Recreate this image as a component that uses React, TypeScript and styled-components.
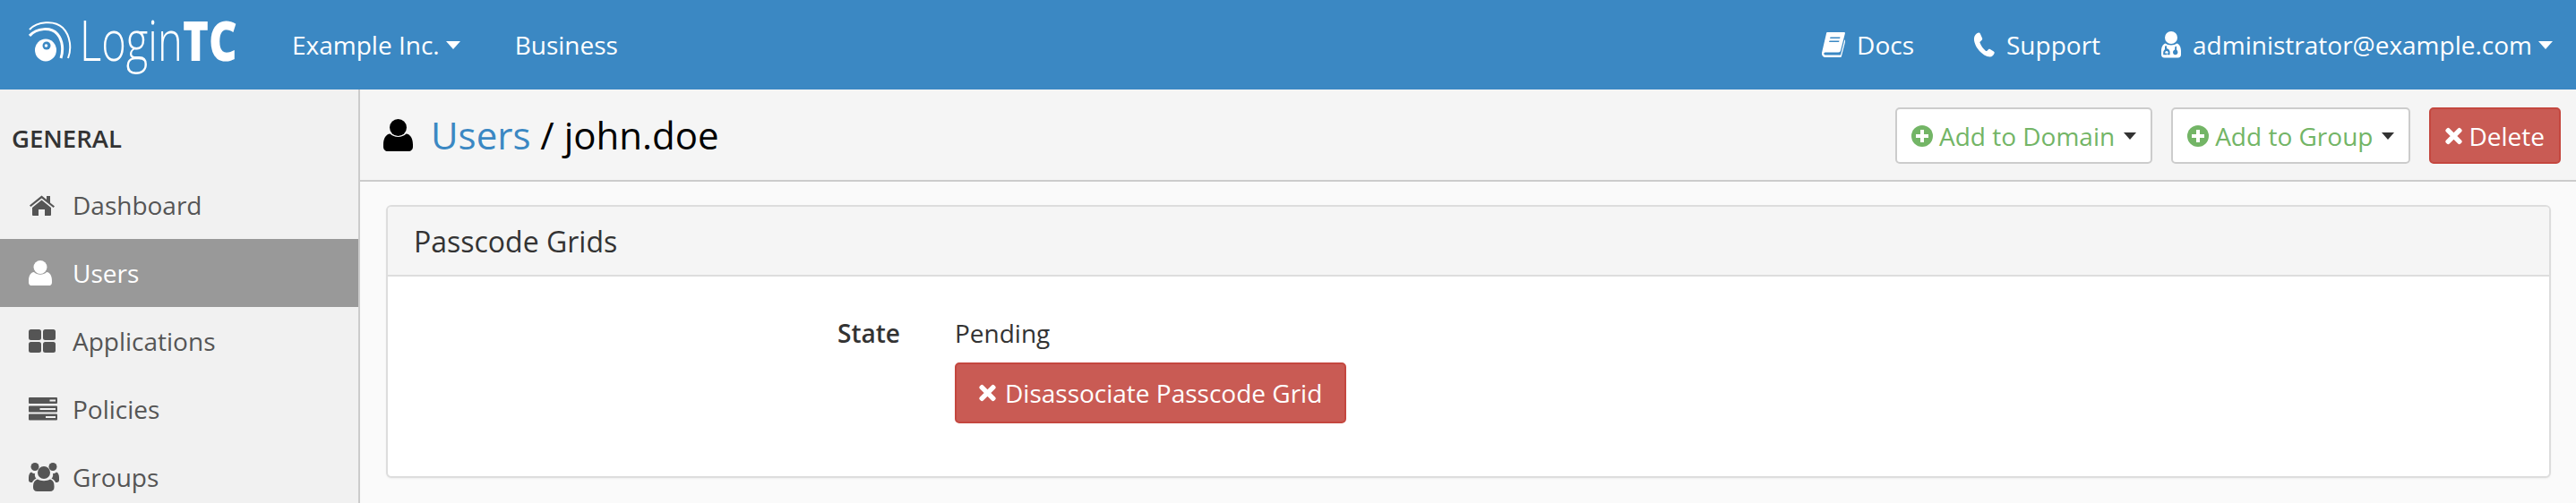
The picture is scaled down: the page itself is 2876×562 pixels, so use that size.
import React from "react";
import styled, { createGlobalStyle } from "styled-components";

const GlobalStyle = createGlobalStyle`
  html, body {
    margin: 0;
    padding: 0;
    background: #fafafa;
    font-family: "Open Sans", "Liberation Sans", sans-serif;
    font-size: 28px;
    color: #333;
  }
`;

const HomeIcon = () => (
  <svg width="30" height="24" viewBox="0 0 30 24" fill="currentColor">
    <path d="M1 12.500 14.500 1.500 20 6V2h4v7.400l5 4.100-1.400 1.500L14.500 4.400 2.400 14z" />
    <path d="M14.500 6.500 25 15v8a1 1 0 0 1-1 1h-6v-7h-7v7H5a1 1 0 0 1-1-1v-8z" />
  </svg>
);

const UserIcon = ({ size = 26 }: { size?: number }) => (
  <svg width={size} height={size * 1.09} viewBox="0 0 33 36" fill="currentColor">
    <circle cx="16.500" cy="9.500" r="9.500" />
    <path d="M7.500 16.500c2.400 2.200 5.400 3.500 9 3.500s6.600-1.300 9-3.500c4.500.5 7.500 5 7.500 12v2.500c0 3-2 5-5 5H5c-3 0-5-2-5-5v-2.500c0-7 3-11.500 7.500-12z" />
  </svg>
);

const GridIcon = () => (
  <svg width="30" height="26" viewBox="0 0 30 26" fill="currentColor">
    <rect x="0" y="0" width="14" height="12" rx="2.500" />
    <rect x="16" y="0" width="14" height="12" rx="2.500" />
    <rect x="0" y="14" width="14" height="12" rx="2.500" />
    <rect x="16" y="14" width="14" height="12" rx="2.500" />
  </svg>
);

const ServerIcon = () => (
  <svg width="32" height="26" viewBox="0 0 32 26" fill="currentColor">
    <path fillRule="evenodd" d="M1 0h30a1 1 0 0 1 1 1v5a1 1 0 0 1-1 1H1a1 1 0 0 1-1-1V1a1 1 0 0 1 1-1zm22.500 2.500v2H30v-2z" />
    <path fillRule="evenodd" d="M1 9.500h30a1 1 0 0 1 1 1v5a1 1 0 0 1-1 1H1a1 1 0 0 1-1-1v-5a1 1 0 0 1 1-1zm11.500 2.500v2H30v-2z" />
    <path fillRule="evenodd" d="M1 18.500h30a1 1 0 0 1 1 1v5a1 1 0 0 1-1 1H1a1 1 0 0 1-1-1v-5a1 1 0 0 1 1-1zm18 2.500v2H30v-2z" />
  </svg>
);

const GroupIcon = () => (
  <svg width="34" height="32" viewBox="0 0 34 32" fill="currentColor">
    <circle cx="7" cy="4.500" r="4.500" />
    <circle cx="27" cy="4.500" r="4.500" />
    <circle cx="17" cy="11" r="7" />
    <path d="M3 10.500c1.200 1 2.500 1.500 4 1.500-.5 1.800 0 4 1.500 5.800C6 18.800 4.500 20.500 4 22H2.500C1 22 0 21 0 19.500v-3c0-3 1-5.300 3-6z" />
    <path d="M31 10.500c-1.200 1-2.500 1.500-4 1.500.5 1.800 0 4-1.500 5.800 2.500 1 4 2.700 4.500 4.200h1.500c1.500 0 2.500-1 2.500-2.500v-3c0-3-1-5.300-3-6z" />
    <path d="M10 18.500c1.800 1.300 4.300 1.700 7 1.700s5.200-.4 7-1.700c3 .8 4.500 3.500 4.500 7.500v1.500c0 2.800-1.700 4.500-4.500 4.500H9.500C6.700 32 5 30.300 5 27.500V26c0-4 2-6.700 5-7.500z" />
  </svg>
);

const BookIcon = () => (
  <svg width="26" height="28" viewBox="0 0 26 28" fill="currentColor">
    <path fillRule="evenodd" d="M6 0h19c1 0 1 1 .8 1.800L21 20.500c-.3 1.300-1 2-2.500 2H4.500c-1.500 0-2.200.6-2.200 1.400s.8 1.600 2.200 1.600h16.500l4.300-17 1.200.5-4.700 18.500c-.2.3-.5.500-1 .5H4c-2.500 0-4-1.700-4-4 0-.8.100-1.500.3-2.200L5 1.500C5.200.5 5.500 0 6 0zm3.500 5.500-.4 1.500h11l.4-1.500zm-1 4-.4 1.500h11l.4-1.500z" />
  </svg>
);

const PhoneIcon = () => (
  <svg width="24" height="28" viewBox="0 0 24 28" fill="currentColor">
    <path d="M6 .5C6.800.3 7.500.8 7.800 1.500l2.300 5.300c.3.7.1 1.400-.4 1.900L7.600 10.700c-.3.3-.3.7-.1 1.100 1.500 4 3.800 7 6.600 9.100.4.3.8.2 1.100 0l1.800-1.600c.6-.5 1.200-.6 1.900-.2l4 2.400c.8.500 1 1.200.7 2-.7 2.200-2.600 4-4.800 4C10.500 27.500 0 15 1 6.500 1.300 3.600 3.300 1.200 6 .5z" />
  </svg>
);

const UserMdIcon = () => (
  <svg width="22" height="30" viewBox="0 0 22 30" fill="currentColor">
    <circle cx="11" cy="7" r="7" />
    <path fillRule="evenodd" d="M4.500 13.500c1.700 1.200 4 2 6.500 2s4.800-.8 6.500-2C20.500 14.500 22 18 22 22v4c0 2-1.200 3.500-3.500 3.500h-15C1.200 29.500 0 28 0 26v-4c0-4 1.500-7.500 4.500-8.500zM4 16.500v3.700c-1.300.8-1.800 2.200-1.800 4.300v1.800h4.300v-1.800H4.200c0-1.500.5-2.600 1.800-2.600s1.800 1.100 1.800 2.600H7v1.800h2.600v-3c0-1.800-1-3.500-3.600-4.400v-2.700zm13 0-1.800 1v3c-1.500.5-2.200 1.700-2.200 3 0 1.500 1.100 2.700 2.700 2.700s2.700-1.200 2.700-2.700c0-1.300-.7-2.500-1.400-3z" />
  </svg>
);

const PlusCircleIcon = () => (
  <svg width="24" height="24" viewBox="0 0 24 24">
    <circle cx="12" cy="12" r="12" fill="currentColor" />
    <path d="M10 5h4v5h5v4h-5v5h-4v-5H5v-4h5z" fill="#fff" />
  </svg>
);

const TimesIcon = () => (
  <svg width="19" height="20" viewBox="0 0 20 20" fill="currentColor" stroke="currentColor" strokeWidth="1.500">
    <path d="M4.500 1.500 10 7l5.500-5.500a1.500 1.500 0 0 1 2 0L18.500 2.500a1.500 1.500 0 0 1 0 2L13 10l5.500 5.500a1.500 1.500 0 0 1 0 2l-1 1a1.500 1.500 0 0 1-2 0L10 13l-5.500 5.500a1.500 1.500 0 0 1-2 0l-1-1a1.500 1.500 0 0 1 0-2L7 10 1.500 4.500a1.500 1.500 0 0 1 0-2l1-1a1.500 1.500 0 0 1 2 0z" />
  </svg>
);

const LogoMark = () => (
  <svg width="48" height="46" viewBox="0 0 48 46" fill="none" stroke="#fff">
    <path d="M1 10C9 1 29-1 38 8c9 9 10 24 6 34" strokeWidth="2" />
    <path d="M1 17C9 8 25 7 32 15c6 7 7 18 4 27" strokeWidth="3" />
    <ellipse cx="19" cy="33" rx="12" ry="12.500" fill="#fff" stroke="none" />
    <circle cx="20" cy="28" r="4.500" fill="#3b88c3" stroke="none" />
    <circle cx="19.500" cy="28" r="1.800" fill="#fff" stroke="none" />
  </svg>
);

const App = () => {
  return (
    <Page>
      <GlobalStyle />
      <Navbar>
        <Logo>
          <LogoMark />
          <LogoWord>
            <LoginText>Login</LoginText>
            <TcText>TC</TcText>
          </LogoWord>
        </Logo>
        <NavLink $left={64}>
          Example Inc.
          <Caret />
        </NavLink>
        <NavLink $left={61}>Business</NavLink>
        <NavSpacer />
        <NavLink>
          <BookIcon />
          Docs
        </NavLink>
        <NavLink $left={66}>
          <PhoneIcon />
          Support
        </NavLink>
        <NavLink $left={68}>
          <UserMdIcon />
          administrator@example.com
          <Caret />
        </NavLink>
      </Navbar>
      <Body>
        <Sidebar>
          <SideHeading>GENERAL</SideHeading>
          <SideItem>
            <SideIcon><HomeIcon /></SideIcon>
            Dashboard
          </SideItem>
          <SideItem $active>
            <SideIcon><UserIcon /></SideIcon>
            Users
          </SideItem>
          <SideItem>
            <SideIcon><GridIcon /></SideIcon>
            Applications
          </SideItem>
          <SideItem>
            <SideIcon><ServerIcon /></SideIcon>
            Policies
          </SideItem>
          <SideItem>
            <SideIcon><GroupIcon /></SideIcon>
            Groups
          </SideItem>
        </Sidebar>
        <Main>
          <PageHeader>
            <Title>
              <TitleIcon><UserIcon size={33} /></TitleIcon>
              <TitleLink>Users</TitleLink> / john.doe
            </Title>
            <Actions>
              <OutlineButton>
                <PlusCircleIcon />
                Add to Domain
                <DarkCaret />
              </OutlineButton>
              <OutlineButton>
                <PlusCircleIcon />
                Add to Group
                <DarkCaret />
              </OutlineButton>
              <DangerButton>
                <TimesIcon />
                Delete
              </DangerButton>
            </Actions>
          </PageHeader>
          <Content>
            <Panel>
              <PanelHeading>Passcode Grids</PanelHeading>
              <PanelBody>
                <FieldLabel>State</FieldLabel>
                <FieldValue>
                  <div>Pending</div>
                  <WideDangerButton>
                    <TimesIcon />
                    Disassociate Passcode Grid
                  </WideDangerButton>
                </FieldValue>
              </PanelBody>
            </Panel>
          </Content>
        </Main>
      </Body>
    </Page>
  );
};

const Page = styled.div`
  width: 2876px;
  height: 562px;
  overflow: hidden;
  display: flex;
  flex-direction: column;
`;

const Navbar = styled.header`
  flex: none;
  height: 100px;
  background: #3b88c3;
  color: #fff;
  display: flex;
  align-items: center;
  padding: 0 26px 0 32px;
`;

const Logo = styled.div`
  flex: none;
  width: 230px;
  margin-bottom: 8px;
  display: flex;
  align-items: center;

  svg {
    flex: none;
  }
`;

const LogoWord = styled.div`
  flex: none;
  margin-left: 9px;
  margin-bottom: 4px;
  display: flex;
  align-items: center;
  font-size: 62px;
  line-height: 84px;
`;

const LoginText = styled.span`
  width: max-content;
  margin-right: -36px;
  font-weight: 300;
  transform: scaleX(0.76);
  transform-origin: left center;
`;

const TcText = styled.span`
  width: max-content;
  margin-right: -15px;
  font-weight: 800;
  transform: scaleX(0.79);
  transform-origin: left center;
`;

const NavLink = styled.a<{ $left?: number }>`
  display: flex;
  align-items: center;
  gap: 13px;
  margin-left: ${(p) => p.$left ?? 0}px;
  font-size: 28px;
  white-space: nowrap;
`;

const NavSpacer = styled.div`
  flex: 1;
`;

const Caret = styled.span`
  display: inline-block;
  width: 0;
  height: 0;
  margin-left: -6px;
  border-left: 8px solid transparent;
  border-right: 8px solid transparent;
  border-top: 9px solid #fff;
`;

const DarkCaret = styled(Caret)`
  margin-left: 3px;
  border-left-width: 7px;
  border-right-width: 7px;
  border-top: 8px solid #333;
`;

const Body = styled.div`
  flex: 1;
  display: flex;
  min-height: 0;
`;

const Sidebar = styled.nav`
  flex: none;
  width: 400px;
  background: #f1f1f1;
  border-right: 2px solid #ccc;
  overflow: hidden;
`;

const SideHeading = styled.div`
  height: 91px;
  padding: 39px 0 0 13px;
  box-sizing: border-box;
  font-size: 27.5px;
  line-height: 32px;
  font-weight: 600;
  color: #333;
`;

const SideItem = styled.div<{ $active?: boolean }>`
  height: 76px;
  display: flex;
  align-items: center;
  padding-left: 32px;
  font-size: 28px;
  color: ${(p) => (p.$active ? "#fff" : "#555")};
  background: ${(p) => (p.$active ? "#999" : "transparent")};
`;

const SideIcon = styled.span`
  flex: none;
  width: 49px;
  display: flex;
  align-items: center;
`;

const Main = styled.main`
  flex: 1;
  min-width: 0;
  display: flex;
  flex-direction: column;
`;

const PageHeader = styled.div`
  flex: none;
  height: 103px;
  box-sizing: border-box;
  padding: 20px 17px 0 26px;
  background: #f5f5f5;
  border-bottom: 2px solid #ccc;
  display: flex;
  justify-content: space-between;
  align-items: flex-start;
`;

const Title = styled.h1`
  margin: 0;
  font-size: 42px;
  line-height: 62px;
  font-weight: 400;
  color: #000;
  display: flex;
  align-items: center;
  white-space: pre;
`;

const TitleIcon = styled.span`
  display: flex;
  width: 53px;
  color: #000;
`;

const TitleLink = styled.a`
  color: #3b88c3;
`;

const Actions = styled.div`
  display: flex;
  gap: 21px;
`;

const ButtonBase = styled.button`
  height: 63px;
  box-sizing: border-box;
  padding: 0 16px;
  border-radius: 5px;
  display: flex;
  align-items: center;
  gap: 7px;
  font-family: inherit;
  font-size: 28px;
  white-space: nowrap;
`;

const OutlineButton = styled(ButtonBase)`
  background: #fff;
  border: 2px solid #ccc;
  color: #73b566;
`;

const DangerButton = styled(ButtonBase)`
  background: #c95b54;
  border: 2px solid #c4473f;
  color: #fff;
`;

const WideDangerButton = styled(DangerButton)`
  height: 68px;
  padding: 0 25px;
  margin-top: 9px;
  gap: 10px;
`;

const Content = styled.div`
  flex: 1;
  background: #fafafa;
  padding: 26px 28px 0 29px;
`;

const Panel = styled.section`
  height: 305px;
  box-sizing: border-box;
  background: #fff;
  border: 2px solid #ddd;
  border-radius: 6px;
  box-shadow: 0 1px 2px rgba(0, 0, 0, 0.05);
  overflow: hidden;
`;

const PanelHeading = styled.div`
  height: 78px;
  box-sizing: border-box;
  padding-left: 29px;
  display: flex;
  align-items: center;
  font-size: 32px;
  color: #333;
  background: #f5f5f5;
  border-bottom: 2px solid #ddd;
`;

const PanelBody = styled.div`
  display: grid;
  grid-template-columns: 572px 1fr;
  column-gap: 61px;
  padding-top: 39px;
  line-height: 48px;
`;

const FieldLabel = styled.div`
  text-align: right;
  font-weight: 600;
  color: #333;
`;

const FieldValue = styled.div`
  color: #333;
`;

export default App;
